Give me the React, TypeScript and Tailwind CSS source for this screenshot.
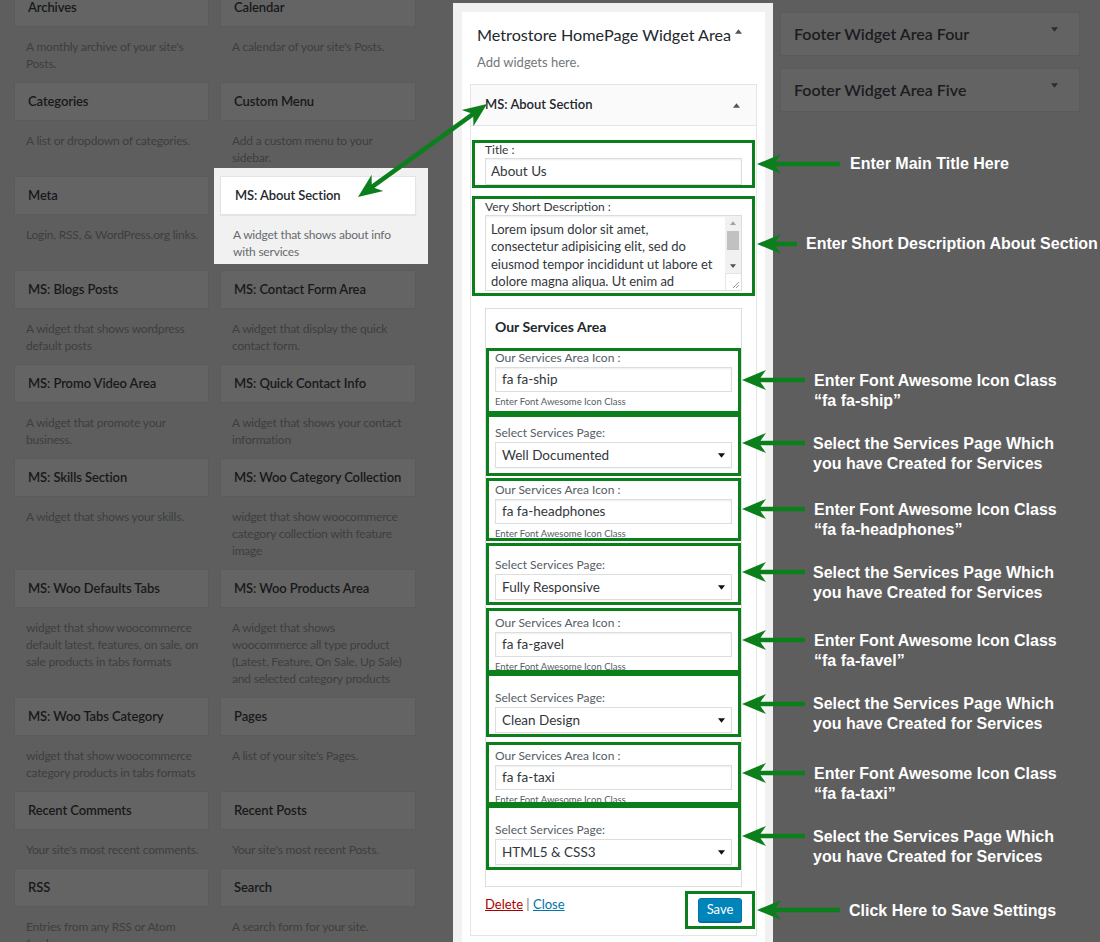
import React from "react";

type Widget = { title: string; desc: string[]; active?: boolean };

const rows: [Widget, Widget][] = [
  [
    { title: "Archives", desc: ["A monthly archive of your site's", "Posts."] },
    { title: "Calendar", desc: ["A calendar of your site's Posts."] },
  ],
  [
    { title: "Categories", desc: ["A list or dropdown of categories."] },
    { title: "Custom Menu", desc: ["Add a custom menu to your", "sidebar."] },
  ],
  [
    { title: "Meta", desc: ["Login, RSS, & WordPress.org links."] },
    { title: "MS: About Section", desc: ["A widget that shows about info", "with services"], active: true },
  ],
  [
    { title: "MS: Blogs Posts", desc: ["A widget that shows wordpress", "default posts"] },
    { title: "MS: Contact Form Area", desc: ["A widget that display the quick", "contact form."] },
  ],
  [
    { title: "MS: Promo Video Area", desc: ["A widget that promote your", "business."] },
    { title: "MS: Quick Contact Info", desc: ["A widget that shows your contact", "information"] },
  ],
  [
    { title: "MS: Skills Section", desc: ["A widget that shows your skills."] },
    {
      title: "MS: Woo Category Collection",
      desc: ["widget that show woocommerce", "category collection with feature", "image"],
    },
  ],
  [
    {
      title: "MS: Woo Defaults Tabs",
      desc: ["widget that show woocommerce", "default latest, features, on sale, on", "sale products in tabs formats"],
    },
    {
      title: "MS: Woo Products Area",
      desc: [
        "A widget that shows",
        "woocommerce all type product",
        "(Latest, Feature, On Sale, Up Sale)",
        "and selected category products",
      ],
    },
  ],
  [
    { title: "MS: Woo Tabs Category", desc: ["widget that show woocommerce", "category products in tabs formats"] },
    { title: "Pages", desc: ["A list of your site's Pages."] },
  ],
  [
    { title: "Recent Comments", desc: ["Your site's most recent comments."] },
    { title: "Recent Posts", desc: ["Your site's most recent Posts."] },
  ],
  [
    { title: "RSS", desc: ["Entries from any RSS or Atom", "feed."] },
    { title: "Search", desc: ["A search form for your site."] },
  ],
];

type Field =
  | { kind: "icon"; value: string; box: string }
  | { kind: "select"; value: string; box: string };

const fields: Field[] = [
  { kind: "icon", value: "fa fa-ship", box: "h-[66px] pt-0" },
  { kind: "select", value: "Well Documented", box: "h-[62px] pt-[9px]" },
  { kind: "icon", value: "fa fa-headphones", box: "mt-[2px] h-[63px] pt-[2px]" },
  { kind: "select", value: "Fully Responsive", box: "mt-[2px] h-[62px] pt-[12px]" },
  { kind: "icon", value: "fa fa-gavel", box: "mt-[3px] h-[65px] pt-[5px]" },
  { kind: "select", value: "Clean Design", box: "h-[64px] pt-[15px]" },
  { kind: "icon", value: "fa fa-taxi", box: "mt-[5px] h-[63px] pt-[4px]" },
  { kind: "select", value: "HTML5 & CSS3", box: "h-[65px] pt-[15px]" },
];

type Note = { x: number; y: number; lines: string[] };

const notes: Note[] = [
  { x: 850, y: 164, lines: ["Enter Main Title Here"] },
  { x: 806, y: 244, lines: ["Enter Short Description About Section"] },
  { x: 814, y: 381, lines: ["Enter Font Awesome Icon Class", "\u201cfa fa-ship\u201d"] },
  { x: 813, y: 444, lines: ["Select the Services Page Which", "you have Created for Services"] },
  { x: 814, y: 510, lines: ["Enter Font Awesome Icon Class", "\u201cfa fa-headphones\u201d"] },
  { x: 813, y: 573, lines: ["Select the Services Page Which", "you have Created for Services"] },
  { x: 814, y: 641, lines: ["Enter Font Awesome Icon Class", "\u201cfa fa-favel\u201d"] },
  { x: 813, y: 704, lines: ["Select the Services Page Which", "you have Created for Services"] },
  { x: 814, y: 774, lines: ["Enter Font Awesome Icon Class", "\u201cfa fa-taxi\u201d"] },
  { x: 813, y: 837, lines: ["Select the Services Page Which", "you have Created for Services"] },
  { x: 849, y: 911, lines: ["Click Here to Save Settings"] },
];

const arrows: { tip: [number, number]; tail: [number, number]; both?: boolean }[] = [
  { tip: [757, 164], tail: [840, 164] },
  { tip: [757, 244], tail: [797, 244] },
  { tip: [742, 380], tail: [805, 380] },
  { tip: [742, 443], tail: [805, 443] },
  { tip: [742, 509], tail: [805, 509] },
  { tip: [742, 572], tail: [805, 572] },
  { tip: [742, 640], tail: [805, 640] },
  { tip: [742, 704], tail: [805, 704] },
  { tip: [742, 773], tail: [805, 773] },
  { tip: [742, 836], tail: [805, 836] },
  { tip: [757, 910], tail: [840, 910] },
  { tip: [487, 104], tail: [358, 197], both: true },
];

const GREEN = "#0c7f1d";

function head(tx: number, ty: number, ux: number, uy: number) {
  const L = 24;
  const W = 10;
  const N = 17;
  const nx = -uy;
  const ny = ux;
  const pts = [
    [tx, ty],
    [tx - ux * L + nx * W, ty - uy * L + ny * W],
    [tx - ux * N, ty - uy * N],
    [tx - ux * L - nx * W, ty - uy * L - ny * W],
  ];
  return pts.map((p) => p.join(",")).join(" ");
}

function Arrows() {
  return (
    <svg className="pointer-events-none absolute left-0 top-0" width="1100" height="942" viewBox="0 0 1100 942">
      {arrows.map((a, i) => {
        const [tx, ty] = a.tip;
        const [sx, sy] = a.tail;
        const len = Math.hypot(tx - sx, ty - sy);
        const ux = (tx - sx) / len;
        const uy = (ty - sy) / len;
        const ex = tx - ux * 16;
        const ey = ty - uy * 16;
        const bx = a.both ? sx + ux * 16 : sx;
        const by = a.both ? sy + uy * 16 : sy;
        return (
          <g key={i} fill={GREEN}>
            <line x1={bx} y1={by} x2={ex} y2={ey} stroke={GREEN} strokeWidth="4.5" />
            <polygon points={head(tx, ty, ux, uy)} />
            {a.both ? <polygon points={head(sx, sy, -ux, -uy)} /> : null}
          </g>
        );
      })}
    </svg>
  );
}

function Caret({ up, className }: { up?: boolean; className: string }) {
  return (
    <svg className={className} width="8" height="5" viewBox="0 0 8 5" aria-hidden="true">
      <polygon points={up ? "0,5 8,5 4,0" : "0,0 8,0 4,5"} fill="currentColor" />
    </svg>
  );
}

function WidgetCell({ w }: { w: Widget }) {
  if (w.active) {
    return (
      <div className="relative">
        <div className="absolute -left-[6px] -right-[12px] -top-[8px] bottom-[6px] bg-[#f1f1f1]" />
        <div className="relative flex h-[39px] items-center border border-[#e2e4e7] bg-white px-[14px] text-[13px] font-semibold tracking-[-0.1px] text-[#23282d] shadow-[0_1px_1px_rgba(0,0,0,0.05)]">
          {w.title}
        </div>
        <div className="relative whitespace-nowrap pb-[10px] pl-[13px] pt-[11px] text-[12px] leading-[17px] tracking-[-0.2px] text-[#666a6e]">
          {w.desc.map((l) => (
            <div key={l}>{l}</div>
          ))}
        </div>
      </div>
    );
  }
  return (
    <div>
      <div className="flex h-[39px] items-center whitespace-nowrap border border-[#5b5b5b] bg-[#646464] px-[13px] text-[13px] font-semibold tracking-[-0.1px] text-[#17191b]">
        {w.title}
      </div>
      <div className="whitespace-nowrap pb-[10px] pl-[12px] pt-[11px] text-[12px] leading-[17px] tracking-[-0.2px] text-[#3c3e40]">
        {w.desc.map((l) => (
          <div key={l}>{l}</div>
        ))}
      </div>
    </div>
  );
}

function ServiceField({ f }: { f: Field }) {
  return (
    <div className={`overflow-hidden border-[3px] border-[#0c7f1d] px-[6px] ${f.box}`}>
      {f.kind === "icon" ? (
        <>
          <div className="text-[12px] leading-[14px] text-[#555d66]">Our Services Area Icon :</div>
          <div className="mt-[2px] flex h-[25px] items-center border border-[#dddddd] bg-white px-[6px] text-[13.5px] text-[#32373c] shadow-[inset_0_1px_2px_rgba(0,0,0,0.07)]">
            {f.value}
          </div>
          <div className="mt-[4px] text-[9.5px] leading-[12px] text-[#555d66]">Enter Font Awesome Icon Class</div>
        </>
      ) : (
        <>
          <div className="text-[12px] leading-[14px] text-[#555d66]">Select Services Page:</div>
          <div className="mt-[2px] flex h-[26px] items-center justify-between border border-[#dddddd] bg-white pl-[6px] pr-[6px] text-[13.5px] text-[#32373c] shadow-[0_1px_1px_rgba(0,0,0,0.04)]">
            <span>{f.value}</span>
            <Caret className="h-[5px] w-[7px] text-[#111]" />
          </div>
        </>
      )}
    </div>
  );
}

function AboutWidgetForm() {
  return (
    <div className="mx-[8px] border border-[#e5e5e5] bg-white">
      <div className="flex h-[41px] items-center justify-between border-b border-[#e5e5e5] bg-[#fafafa] pl-[14px] pr-[16px]">
        <span className="text-[13px] font-semibold text-[#23282d]">MS: About Section</span>
        <Caret up className="h-[5px] w-[7px] text-[#555]" />
      </div>
      <div className="px-[1px] pt-[14px]">
        <div className="h-[48px] border-[3px] border-[#0c7f1d] px-[10px]">
          <div className="text-[12px] leading-[14px] text-[#32373c]">Title :</div>
          <div className="mt-[1px] flex h-[27px] items-center border border-[#dddddd] px-[5px] text-[13.5px] text-[#32373c] shadow-[inset_0_1px_2px_rgba(0,0,0,0.07)]">
            About Us
          </div>
        </div>

        <div className="mt-[8px] h-[100px] border-[3px] border-[#0c7f1d] px-[10px] pt-[1px]">
          <div className="text-[12px] leading-[14px] text-[#32373c]">Very Short Description :</div>
          <div className="mt-[1px] flex h-[76px] border border-[#dddddd] shadow-[inset_0_1px_2px_rgba(0,0,0,0.07)]">
            <div className="flex-1 overflow-hidden whitespace-nowrap pl-[5px] pt-[5px] text-[13px] leading-[17.3px] text-[#32373c]">
              <div>Lorem ipsum dolor sit amet,</div>
              <div>consectetur adipisicing elit, sed do</div>
              <div>eiusmod tempor incididunt ut labore et</div>
              <div>dolore magna aliqua. Ut enim ad</div>
            </div>
            <div className="flex w-[16px] flex-col">
              <div className="flex h-[57px] flex-col items-center bg-[#f1f1f1]">
                <Caret up className="mt-[5px] h-[4px] w-[6px] text-[#a3a3a3]" />
                <div className="mt-[6px] h-[19px] w-[12px] bg-[#c1c1c1]" />
                <Caret className="mb-[5px] mt-auto h-[4px] w-[6px] text-[#505050]" />
              </div>
              <div className="flex flex-1 items-end justify-end border-l border-t border-[#e5e5e5] p-[2px]">
                <svg width="7" height="7" viewBox="0 0 7 7" aria-hidden="true">
                  <path d="M1 7 L7 1 M4 7 L7 4" stroke="#9a9a9a" strokeWidth="1" />
                </svg>
              </div>
            </div>
          </div>
        </div>

        <div className="mx-[13px] mt-[12px] border border-[#dddddd] pb-[16px]">
          <div className="pb-[11px] pl-[9px] pt-[8px] text-[14px] font-bold leading-[20px] text-[#23282d]">
            Our Services Area
          </div>
          {fields.map((f, i) => (
            <ServiceField key={i} f={f} />
          ))}
        </div>

        <div className="flex items-start justify-between pb-[6px] pl-[13px] pt-[4px]">
          <div className="mt-[4px] text-[13px] leading-[18px]">
            <span className="text-[#a00] underline">Delete</span>
            <span className="text-[#72777c]"> | </span>
            <span className="text-[#0073aa] underline">Close</span>
          </div>
          <div className="border-[3px] border-[#0c7f1d] px-[10px] py-[4px]">
            <div className="flex h-[24px] w-[44px] items-center justify-center rounded-[3px] border border-[#0073aa] bg-[#0085ba] text-[13px] text-white shadow-[0_1px_0_#006799]">
              Save
            </div>
          </div>
        </div>
      </div>
    </div>
  );
}

export default function App() {
  return (
    <div className="relative flex h-[942px] w-[1100px] items-start overflow-hidden bg-[#5e5e5e] font-['Lato','Open_Sans',sans-serif]">
      <div className="w-[440px] shrink-0">
        <div className="-mt-[12px] grid grid-cols-[195px_196px] gap-x-[11px] pl-[14px]">
          {rows.map(([a, b]) => (
            <React.Fragment key={a.title}>
              <WidgetCell w={a} />
              <WidgetCell w={b} />
            </React.Fragment>
          ))}
        </div>
      </div>

      <div className="ml-[13px] mt-[3px] h-[939px] w-[320px] shrink-0 bg-[#f1f1f1] pl-[9px] pr-[8px] pt-[9px]">
        <div className="h-full bg-white pt-[11px]">
          <div className="flex items-start whitespace-nowrap pl-[15px] text-[16.2px] leading-[24px] text-[#23282d]">
            Metrostore HomePage Widget Area
            <Caret up className="ml-[4px] mt-[6px] h-[5px] w-[7px] text-[#555]" />
          </div>
          <div className="mb-[12px] mt-[5px] pl-[15px] text-[13px] leading-[20px] text-[#72777c]">Add widgets here.</div>
          <AboutWidgetForm />
        </div>
      </div>

      <div className="ml-[7px] mt-[12px] flex w-[300px] shrink-0 flex-col gap-[12px]">
        {["Footer Widget Area Four", "Footer Widget Area Five"].map((t) => (
          <div
            key={t}
            className="flex h-[44px] items-center justify-between border border-[#5b5b5b] bg-[#636363] pl-[13px] pr-[21px] text-[16px] font-semibold text-[#1b1c1e]"
          >
            <span>{t}</span>
            <Caret className="-mt-[10px] h-[5px] w-[7px] text-[#2c2c2c]" />
          </div>
        ))}
      </div>

      <Arrows />

      {notes.map((n) => (
        <div
          key={`${n.x}-${n.y}`}
          className="absolute whitespace-nowrap font-['Liberation_Sans',Arial,sans-serif] text-[16px] font-bold leading-[20px] text-white"
          style={{ left: n.x, top: n.y - 10 }}
        >
          {n.lines.map((l) => (
            <div key={l}>{l}</div>
          ))}
        </div>
      ))}
    </div>
  );
}
